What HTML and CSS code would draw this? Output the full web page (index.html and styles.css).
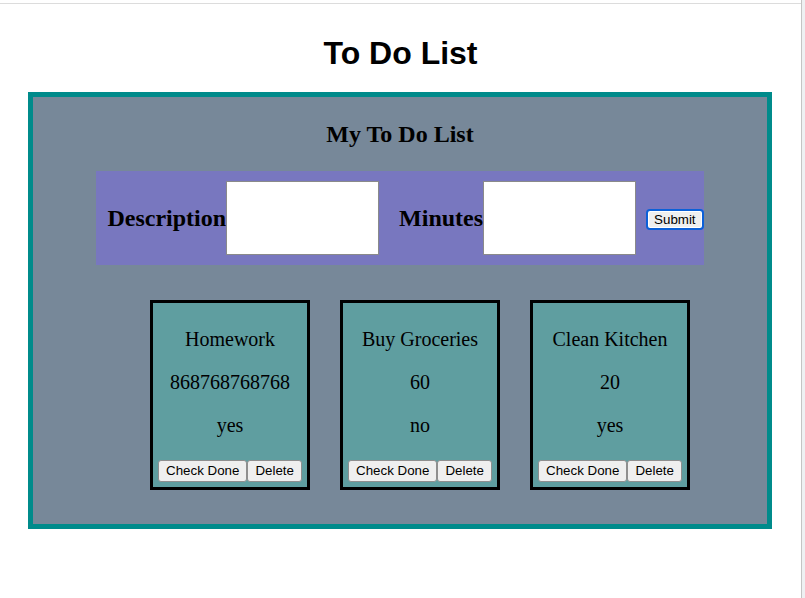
FILE: index.html
```html
<!DOCTYPE html>
<html lang="en">
<head>
<meta charset="utf-8">
<title>To Do List</title>
<link rel="stylesheet" href="styles.css">
</head>
<body>
<div class="frame">
  <div class="page">
    <h1 class="title">To Do List</h1>
    <div class="board">
      <h2 class="board-title">My To Do List</h2>
      <form class="entry">
        <label class="entry-label" for="desc">Description</label>
        <input class="entry-input" id="desc" type="text">
        <label class="entry-label entry-label--gap" for="mins">Minutes</label>
        <input class="entry-input" id="mins" type="text">
        <button class="submit" type="button">Submit</button>
      </form>
      <ul class="cards">
        <li class="card">
          <p class="card-line">Homework</p>
          <p class="card-line">868768768768</p>
          <p class="card-line">yes</p>
          <div class="card-actions"><button class="btn" type="button">Check Done</button><button class="btn" type="button">Delete</button></div>
        </li>
        <li class="card">
          <p class="card-line">Buy Groceries</p>
          <p class="card-line">60</p>
          <p class="card-line">no</p>
          <div class="card-actions"><button class="btn" type="button">Check Done</button><button class="btn" type="button">Delete</button></div>
        </li>
        <li class="card">
          <p class="card-line">Clean Kitchen</p>
          <p class="card-line">20</p>
          <p class="card-line">yes</p>
          <div class="card-actions"><button class="btn" type="button">Check Done</button><button class="btn" type="button">Delete</button></div>
        </li>
      </ul>
    </div>
  </div>
</div>
</body>
</html>
```
FILE: styles.css
```css
html, body {
  margin: 0;
  padding: 0;
  background: #eef0f2;
}

.frame {
  width: 802px;
  min-height: 598px;
  box-sizing: border-box;
  background: #ffffff;
  border-right: 1px solid #c4c4c4;
  padding-top: 3px;
}

.page {
  border-top: 1px solid #dcdcdc;
  padding-top: 31px;
  padding-bottom: 40px;
}

.title {
  margin: 0 0 20px;
  font-family: "Liberation Sans", Arial, sans-serif;
  font-weight: bold;
  font-size: 32px;
  line-height: 37px;
  text-align: center;
  color: #000;
}

.board {
  width: 744px;
  margin-left: 28px;
  box-sizing: border-box;
  border: 5px solid #008b8b;
  background: #778899;
  font-family: "Liberation Serif", "Times New Roman", serif;
}

.board-title {
  margin: 23px 0;
  font-size: 24px;
  line-height: 28px;
  font-weight: bold;
  text-align: center;
  color: #000;
}

.entry {
  display: flex;
  align-items: center;
  width: fit-content;
  margin: 0 auto;
  padding: 10px 0 10px 11px;
  background: #7877bf;
}

.entry-label {
  font-size: 24px;
  font-weight: bold;
  color: #000;
}

.entry-label--gap {
  margin-left: 20px;
}

.entry-input {
  width: 153px;
  height: 74px;
  box-sizing: border-box;
  margin: 0;
  padding: 0;
  border: 1px solid #8a8a8a;
  background: #fff;
}

.submit {
  margin: 3px 0 0 10px;
  padding: 1px 6px;
  font-family: "Liberation Sans", Arial, sans-serif;
  font-size: 13.333px;
  line-height: 15px;
  color: #000;
  background: #efefef;
  border: 2px solid #0b60d8;
  border-radius: 4px;
  box-shadow: inset 0 0 0 1px #ffffff;
}

.cards {
  display: flex;
  justify-content: center;
  gap: 30px;
  list-style: none;
  margin: 35px 0 34px;
  padding: 0 0 0 40px;
}

.card {
  width: 160px;
  height: 190px;
  box-sizing: border-box;
  border: 3px solid #000;
  background: #5f9ea0;
  padding: 5px;
  text-align: center;
}

.card-line {
  margin: 20px 0;
  font-size: 20px;
  line-height: 23px;
  color: #000;
}

.card-actions {
  display: flex;
  justify-content: center;
  padding-top: 3px;
}

.btn {
  flex-shrink: 0;
  white-space: nowrap;
  margin: 0;
  padding: 2px 7px;
  font-family: "Liberation Sans", Arial, sans-serif;
  font-size: 13.333px;
  line-height: 16px;
  color: #000;
  background: #efefef;
  border: 1px solid #8f8f8f;
  border-radius: 3px;
}
```
